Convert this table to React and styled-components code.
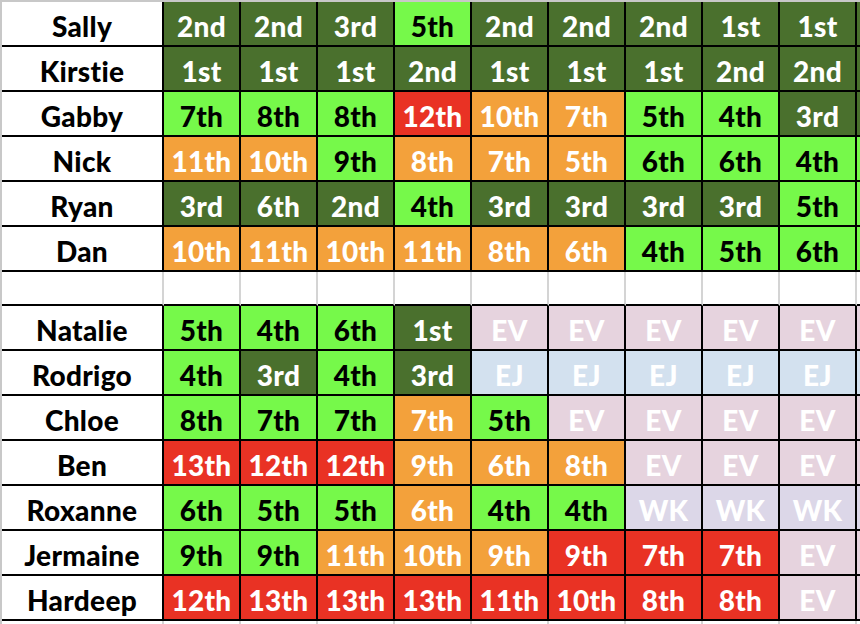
import React from "react";
import styled, { createGlobalStyle } from "styled-components";

const Global = createGlobalStyle`
  html, body { margin: 0; padding: 0; background: #ffffff; overflow: hidden; }
  body { font-family: Lato, "Open Sans", sans-serif; }
`;

const COLORS = {
  D: { bg: "#4a702d", fg: "#ffffff" },
  L: { bg: "#76f94a", fg: "#000000" },
  O: { bg: "#f3a13b", fg: "#ffffff" },
  R: { bg: "#e93224", fg: "#ffffff" },
  EV: { bg: "#e6d3de", fg: "#ffffff" },
  EJ: { bg: "#d3e1ef", fg: "#ffffff" },
  WK: { bg: "#dcd7e8", fg: "#ffffff" },
};

const parse = (s) =>
  s.split(" ").map((t) => {
    if (t === "EV" || t === "EJ" || t === "WK") return { text: t, kind: t };
    const [text, kind] = t.split(":");
    return { text, kind };
  });

const groupA = [
  ["Sally", "2nd:D 2nd:D 3rd:D 5th:L 2nd:D 2nd:D 2nd:D 1st:D 1st:D"],
  ["Kirstie", "1st:D 1st:D 1st:D 2nd:D 1st:D 1st:D 1st:D 2nd:D 2nd:D"],
  ["Gabby", "7th:L 8th:L 8th:L 12th:R 10th:O 7th:O 5th:L 4th:L 3rd:D"],
  ["Nick", "11th:O 10th:O 9th:L 8th:O 7th:O 5th:O 6th:L 6th:L 4th:L"],
  ["Ryan", "3rd:D 6th:D 2nd:D 4th:L 3rd:D 3rd:D 3rd:D 3rd:D 5th:L"],
  ["Dan", "10th:O 11th:O 10th:O 11th:O 8th:O 6th:O 4th:L 5th:L 6th:L"],
];

const groupB = [
  ["Natalie", "5th:L 4th:L 6th:L 1st:D EV EV EV EV EV"],
  ["Rodrigo", "4th:L 3rd:D 4th:L 3rd:D EJ EJ EJ EJ EJ"],
  ["Chloe", "8th:L 7th:L 7th:L 7th:O 5th:L EV EV EV EV"],
  ["Ben", "13th:R 12th:R 12th:R 9th:O 6th:O 8th:O EV EV EV"],
  ["Roxanne", "6th:L 5th:L 5th:L 6th:O 4th:L 4th:L WK WK WK"],
  ["Jermaine", "9th:L 9th:L 11th:O 10th:O 9th:O 9th:R 7th:R 7th:R EV"],
  ["Hardeep", "12th:R 13th:R 13th:R 13th:R 11th:R 10th:R 8th:R 8th:R EV"],
];

const Sheet = styled.div`
  width: 860px;
  height: 624px;
  overflow: hidden;
  border-top: 2px solid #c8c8c8;
  border-left: 2px solid #c8c8c8;
  box-sizing: border-box;
  display: flex;
  flex-direction: column;
`;

const Row = styled.div`
  display: grid;
  grid-template-columns: 162px repeat(10, 77px);
  flex: none;
`;

const NameCell = styled.div`
  height: ${(p) => p.$h}px;
  border-bottom: 2px solid ${(p) => (p.$ghost ? "transparent" : "#000")};
  border-right: 2px solid ${(p) => (p.$blank ? "#d4d4d4" : "#000")};
  display: flex;
  align-items: center;
  justify-content: center;
  padding-top: 4px;
  box-sizing: content-box;
  font-family: Lato, "Open Sans", sans-serif;
  font-weight: 900;
  font-size: 28px;
  letter-spacing: 0.3px;
  color: #000;
  white-space: nowrap;
`;

const Cell = styled.div`
  height: ${(p) => p.$h}px;
  background: ${(p) => (p.$kind ? COLORS[p.$kind].bg : "#ffffff")};
  color: ${(p) => (p.$kind ? COLORS[p.$kind].fg : "#000")};
  border-bottom: 2px solid ${(p) => (p.$ghost ? "transparent" : "#000")};
  border-right: 2px solid ${(p) => (p.$blank ? "#d4d4d4" : "#000")};
  display: flex;
  align-items: center;
  justify-content: center;
  padding-top: 4px;
  box-sizing: content-box;
  font-family: Lato, "Open Sans", sans-serif;
  font-weight: 900;
  font-size: 28px;
  letter-spacing: 0.3px;
  white-space: nowrap;
  overflow: hidden;
`;

const DataRow = ({ name, cells }) => {
  const list = parse(cells);
  const last = list[list.length - 1];
  return (
    <Row>
      <NameCell $h={39}>{name}</NameCell>
      {list.map((c, i) => (
        <Cell key={i} $h={39} $kind={c.kind}>
          {c.text}
        </Cell>
      ))}
      <Cell $h={39} $kind={last.kind} />
    </Row>
  );
};

const BlankRow = ({ h, ghost }) => (
  <Row>
    <NameCell $h={h} $blank $ghost={ghost} />
    {Array.from({ length: 10 }).map((_, i) => (
      <Cell key={i} $h={h} $blank $ghost={ghost} />
    ))}
  </Row>
);

export default function App() {
  return (
    <>
      <Global />
      <Sheet>
        {groupA.map(([n, c]) => (
          <DataRow key={n} name={n} cells={c} />
        ))}
        <BlankRow h={28} />
        {groupB.map(([n, c]) => (
          <DataRow key={n} name={n} cells={c} />
        ))}
        <BlankRow h={20} ghost />
      </Sheet>
    </>
  );
}
